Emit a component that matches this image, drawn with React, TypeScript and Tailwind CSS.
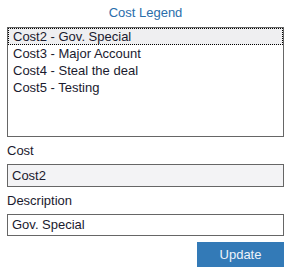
const items = [
  "Cost2 - Gov. Special",
  "Cost3 - Major Account",
  "Cost4 - Steal the deal",
  "Cost5 - Testing",
];

export default function App() {
  return (
    <div className="w-[291px] h-[274px] bg-white pl-[7px] pr-[7px] pt-[5px] font-['Liberation_Sans',Arial,sans-serif] text-[13px] text-[#1a1a2e]">
      <div className="text-center leading-[16px] text-[#2a6eab]">Cost Legend</div>

      <div className="mt-[6px] h-[110px] border border-[#666] bg-white">
        {items.map((item, i) => (
          <div
            key={item}
            className={
              i === 0
                ? "h-[17px] leading-[15px] px-[4px] border border-dotted border-black bg-[#efeff1]"
                : "h-[17px] leading-[15px] px-[4px] border border-transparent"
            }
          >
            {item}
          </div>
        ))}
      </div>

      <div className="mt-[6px] leading-[16px]">Cost</div>
      <div className="mt-[5px] h-[23px] border border-[#666] bg-[#f3f3f5] px-[4px] leading-[21px]">
        Cost2
      </div>

      <div className="mt-[6px] leading-[16px]">Description</div>
      <div className="mt-[5px] h-[22px] border border-[#666] bg-white px-[4px] leading-[20px]">
        Gov. Special
      </div>

      <div className="flex justify-end mt-[6px]">
        <button className="w-[87px] h-[25px] bg-[#337ab7] text-[#eef3fa] leading-[25px]">
          Update
        </button>
      </div>
    </div>
  );
}
